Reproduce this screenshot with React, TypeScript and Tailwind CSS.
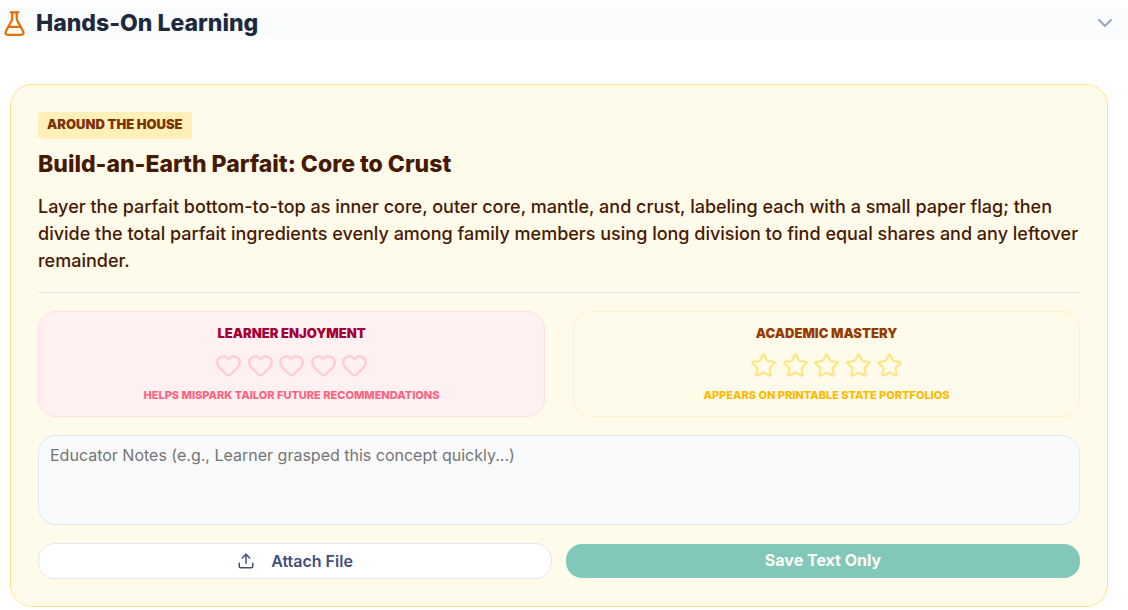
import React from 'react'
import { ChevronDown, FlaskConical, Heart, Star, Upload } from 'lucide-react'

const SCORES = [1, 2, 3, 4, 5]

interface RatingProps {
  title: string
  hint: string
  unit: string
  icon: React.ElementType
  box: string
  titleColor: string
  iconColor: string
  hintColor: string
}

const Rating = ({ title, hint, unit, icon: Icon, box, titleColor, iconColor, hintColor }: RatingProps) => {
  const [score, setScore] = React.useState(0)

  return (
    <div className={`flex flex-col items-center rounded-[18px] border px-4 pt-3 pb-3 ${box}`}>
      <h4 className={`text-[13px] leading-[18px] font-black uppercase ${titleColor}`}>{title}</h4>
      <div className="mt-[10px] flex w-[153px] justify-between">
        {SCORES.map(n => (
          <button key={n} type="button" aria-label={`${n} ${unit}`} onClick={() => setScore(n)}>
            <Icon className={`size-[27px] ${iconColor}`} fill={n <= score ? 'currentColor' : 'none'} />
          </button>
        ))}
      </div>
      <p className={`mt-[7px] text-[11px] leading-[18px] font-extrabold uppercase ${hintColor}`}>{hint}</p>
    </div>
  )
}

export default function App() {
  const [notes, setNotes] = React.useState('')

  return (
    <main className="bg-white pt-[7px] font-['Inter',sans-serif]">
      {/*section header*/}
      <header className="flex h-8 items-center justify-between rounded-tr-lg bg-[#fbfcfe] pr-[11px] pl-px">
        <h2 className="flex items-center gap-2 text-[23px] leading-8 font-extrabold text-[#1d293d]">
          <FlaskConical className="size-[27px] text-[#e17100]" />
          Hands-On Learning
        </h2>
        <button type="button" aria-label="Toggle section">
          <ChevronDown className="size-6 text-[#99a3c0]" />
        </button>
      </header>

      {/*activity card*/}
      <article className="mt-[45px] mr-5 ml-[10px] rounded-[22px] border border-[#fee685] bg-[#fffbeb] p-[27px]">
        <span className="inline-block rounded bg-[#ffefb9] px-[9px] pb-[2px] align-top text-[13px] leading-[25px] font-black text-[#7b3306] uppercase">
          Around the House
        </span>
        <h3 className="mt-[9px] text-[23px] leading-8 font-extrabold text-[#461901]">
          Build-an-Earth Parfait: Core to Crust
        </h3>
        <p className="mt-[13px] text-[18px] leading-[27px] font-medium text-[#461901]">
          Layer the parfait bottom-to-top as inner core, outer core, mantle, and crust, labeling each with a small paper flag; then divide the total parfait ingredients evenly among family members using long division to find equal shares and any leftover remainder.
        </p>

        <div className="mt-[18px] grid grid-cols-2 gap-7 border-t border-[#e2e8f0] pt-[18px]">
          <Rating
            title="Learner Enjoyment"
            hint="Helps MiSpark tailor future recommendations"
            unit="hearts"
            icon={Heart}
            box="border-[#ffdfe3] bg-[#fff0f1]"
            titleColor="text-[#a50036]"
            iconColor="text-[#ffccd3]"
            hintColor="text-[#ff637e]"
          />
          <Rating
            title="Academic Mastery"
            hint="Appears on printable state portfolios"
            unit="stars"
            icon={Star}
            box="border-[#fef3c6] bg-[#fffbeb]"
            titleColor="text-[#973c00]"
            iconColor="text-[#fee685]"
            hintColor="text-[#ffb900]"
          />
        </div>

        <textarea
          aria-label="Educator Notes"
          placeholder="Educator Notes (e.g., Learner grasped this concept quickly...)"
          value={notes}
          onChange={e => setNotes(e.target.value)}
          className="mt-[18px] block h-[90px] w-full resize-none rounded-[18px] border border-[#e2e8f0] bg-[#f8fafc] px-[11px] py-[7px] text-[16px] leading-6 text-[#1d293d] outline-none placeholder:text-[#757575]"
        />

        <div className="mt-[18px] grid grid-cols-2 items-center gap-[14px]">
          <button
            type="button"
            className="flex h-9 items-center justify-center gap-4 rounded-[16px] border border-[#e2e8f0] bg-white text-[16px] leading-6 font-semibold text-[#434f78]"
          >
            <Upload className="size-[18px]" />
            Attach File
          </button>
          <button
            type="button"
            className="h-[34px] rounded-[16px] bg-[#81c8ba] pb-[2px] text-[16px] leading-6 font-bold text-[#fffdf5]"
          >
            Save Text Only
          </button>
        </div>
      </article>
    </main>
  )
}
